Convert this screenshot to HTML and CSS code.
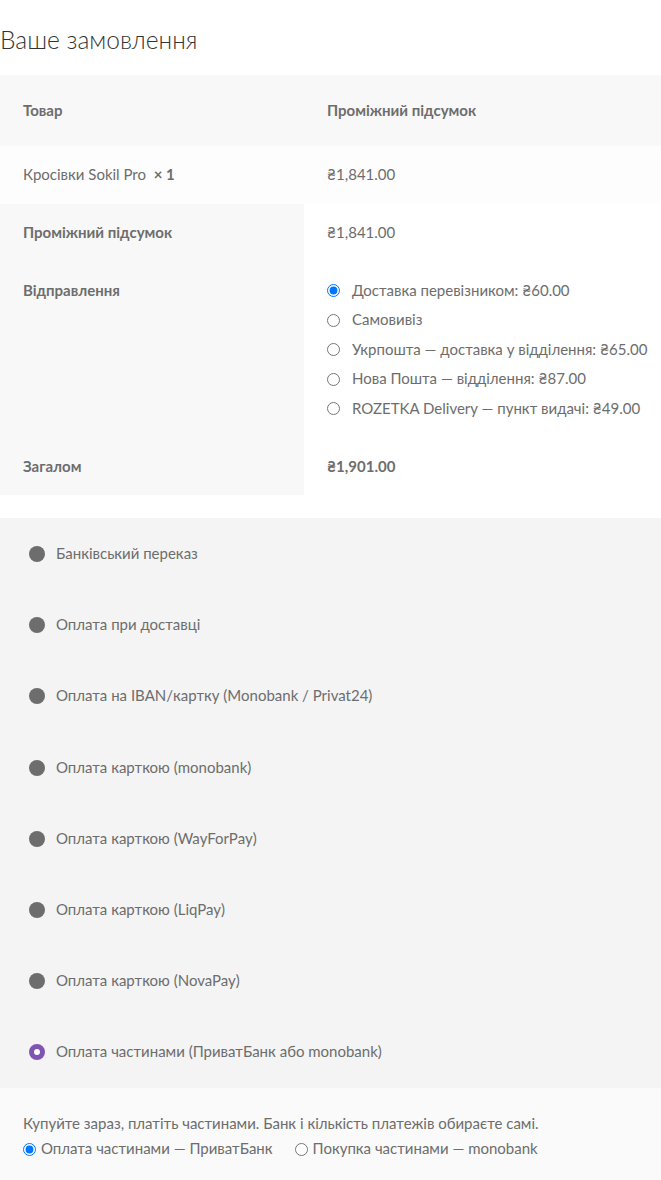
FILE: index.html
```html
<!DOCTYPE html>
<html lang="uk">
<head>
    <meta charset="UTF-8">
    <meta name="viewport" content="width=device-width, initial-scale=1.0">
    <title>Ваше замовлення</title>
    <link rel="stylesheet" href="styles.css">
</head>
<body>

    <div class="checkout">
        <!-- Order review -->
        <h3 class="order-heading">Ваше замовлення</h3>

        <table class="order-table">
            <thead>
                <tr>
                    <th class="col-name">Товар</th>
                    <th>Проміжний підсумок</th>
                </tr>
            </thead>
            <tbody>
                <tr class="cart-item">
                    <td>Кросівки Sokil Pro&nbsp; <strong class="qty">×&nbsp;1</strong></td>
                    <td>₴1,841.00</td>
                </tr>
            </tbody>
            <tfoot>
                <tr>
                    <th>Проміжний підсумок</th>
                    <td>₴1,841.00</td>
                </tr>
                <tr>
                    <th>Відправлення</th>
                    <td>
                        <ul class="shipping-methods">
                            <li><label><input type="radio" name="shipping" checked> Доставка перевізником: ₴60.00</label></li>
                            <li><label><input type="radio" name="shipping"> Самовивіз</label></li>
                            <li><label><input type="radio" name="shipping"> Укрпошта — доставка у відділення: ₴65.00</label></li>
                            <li><label><input type="radio" name="shipping"> Нова Пошта — відділення: ₴87.00</label></li>
                            <li><label><input type="radio" name="shipping"> ROZETKA Delivery — пункт видачі: ₴49.00</label></li>
                        </ul>
                    </td>
                </tr>
                <tr>
                    <th>Загалом</th>
                    <td><strong>₴1,901.00</strong></td>
                </tr>
            </tfoot>
        </table>

        <!-- Payment -->
        <div class="payment">
            <ul class="payment-methods">
                <li><span class="dot"></span>Банківський переказ</li>
                <li><span class="dot"></span>Оплата при доставці</li>
                <li><span class="dot"></span>Оплата на IBAN/картку (Monobank / Privat24)</li>
                <li><span class="dot"></span>Оплата карткою (monobank)</li>
                <li><span class="dot"></span>Оплата карткою (WayForPay)</li>
                <li><span class="dot"></span>Оплата карткою (LiqPay)</li>
                <li><span class="dot"></span>Оплата карткою (NovaPay)</li>
                <li><span class="dot dot-active"></span>Оплата частинами (ПриватБанк або monobank)</li>
            </ul>

            <div class="payment-box">
                <p>Купуйте зараз, платіть частинами. Банк і кількість платежів обираєте самі.</p>
                <div class="parts-options">
                    <label><input type="radio" name="parts" checked>Оплата частинами — ПриватБанк</label>
                    <label><input type="radio" name="parts">Покупка частинами — monobank</label>
                </div>
            </div>
        </div>
    </div>

</body>
</html>
```

FILE: styles.css
```css
body {
    margin: 0;
    background-color: #ffffff;
    font-family: Lato, "Noto Sans", sans-serif;
    font-size: 15px;
    line-height: 25.9px;
    color: #6d6d6d;
}

.order-heading {
    font-size: 24.5px;
    font-weight: 300;
    color: #333333;
    line-height: 42px;
    margin: 19px 0 14px;
}

.order-table {
    width: 100%;
    border-collapse: collapse;
    table-layout: fixed;
    margin-bottom: 23px;
}

.col-name {
    width: 258px;
}

.order-table th,
.order-table td {
    text-align: left;
    vertical-align: top;
    padding: 16px 23px;
}

.order-table th {
    background-color: #f8f8f8;
    font-weight: 700;
}

.order-table thead th {
    padding: 22.65px 23px;
}

.order-table tbody td {
    background-color: #fdfdfd;
}

.qty {
    font-weight: 700;
}

.shipping-methods {
    list-style: none;
    margin: 0;
    padding: 0;
}

.shipping-methods li {
    margin-bottom: 3.5px;
}

.shipping-methods li:last-child {
    margin-bottom: 0;
}

.shipping-methods label {
    display: flex;
    align-items: center;
    white-space: nowrap;
}

.shipping-methods input {
    width: 13px;
    height: 13px;
    margin: 0 12px 0 0;
}

.payment {
    background-color: #f4f4f4;
}

.payment-methods {
    list-style: none;
    margin: 0;
    padding: 0;
}

.payment-methods li {
    display: flex;
    align-items: center;
    padding: 22.65px 23px;
}

.dot {
    width: 16px;
    height: 16px;
    border-radius: 50%;
    background-color: #6d6d6d;
    margin: 0 11px 0 6px;
    flex-shrink: 0;
}

.dot-active {
    box-sizing: border-box;
    background-color: #ffffff;
    border: 5px solid #7f54b3;
}

.payment-box {
    background-color: #fafafa;
    padding: 22.65px 23px;
}

.payment-box p {
    margin: 0;
}

.parts-options {
    display: flex;
    align-items: center;
}

.parts-options label {
    display: flex;
    align-items: center;
    margin-right: 22px;
}

.parts-options input {
    width: 13px;
    height: 13px;
    margin: 0 5px 0 0;
}
```
